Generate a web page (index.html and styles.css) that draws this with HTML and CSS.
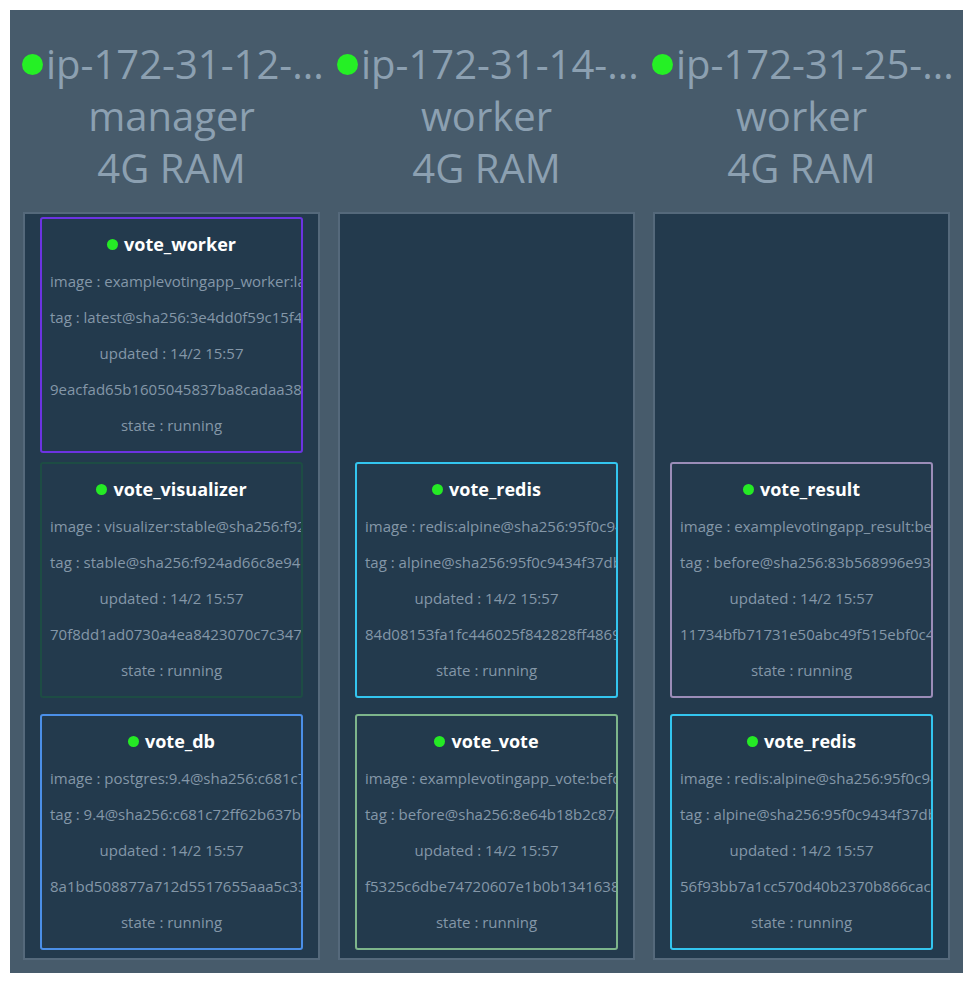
FILE: index.html
```html
<!DOCTYPE html>
<html lang="en">
<head>
<meta charset="utf-8">
<title>Swarm Visualizer</title>
<link rel="stylesheet" href="styles.css">
</head>
<body>
<div class="panel">
  <section class="node">
    <header class="node-head">
      <div class="node-name"><span class="node-dot"></span><span class="node-host">ip-172-31-12-...</span></div>
      <div class="node-line">manager</div>
      <div class="node-line">4G RAM</div>
    </header>
    <div class="stack">
      <div class="card card-purple card-tight">
        <div class="card-title"><span class="dot"></span>vote_worker</div>
        <div class="card-line">image : examplevotingapp_worker:latest@sha256:3e4dd0f59c15f4</div>
        <div class="card-line">tag : latest@sha256:3e4dd0f59c15f4a8b2c1</div>
        <div class="card-line">updated : 14/2 15:57</div>
        <div class="card-line">9eacfad65b1605045837ba8cadaa3840d1a2</div>
        <div class="card-line">state : running</div>
      </div>
      <div class="card card-teal">
        <div class="card-title"><span class="dot"></span>vote_visualizer</div>
        <div class="card-line">image : visualizer:stable@sha256:f924ad66c8e94b</div>
        <div class="card-line">tag : stable@sha256:f924ad66c8e94b1a7c</div>
        <div class="card-line">updated : 14/2 15:57</div>
        <div class="card-line">70f8dd1ad0730a4ea8423070c7c3472b91</div>
        <div class="card-line">state : running</div>
      </div>
      <div class="card card-blue">
        <div class="card-title"><span class="dot"></span>vote_db</div>
        <div class="card-line">image : postgres:9.4@sha256:c681c72ff62b637b</div>
        <div class="card-line">tag : 9.4@sha256:c681c72ff62b637b8a9e</div>
        <div class="card-line">updated : 14/2 15:57</div>
        <div class="card-line">8a1bd508877a712d5517655aaa5c33e1f0</div>
        <div class="card-line">state : running</div>
      </div>
    </div>
  </section>
  <section class="node">
    <header class="node-head">
      <div class="node-name"><span class="node-dot"></span><span class="node-host">ip-172-31-14-...</span></div>
      <div class="node-line">worker</div>
      <div class="node-line">4G RAM</div>
    </header>
    <div class="stack">
      <div class="card card-cyan">
        <div class="card-title"><span class="dot"></span>vote_redis</div>
        <div class="card-line">image : redis:alpine@sha256:95f0c9434f37db</div>
        <div class="card-line">tag : alpine@sha256:95f0c9434f37db0a1e</div>
        <div class="card-line">updated : 14/2 15:57</div>
        <div class="card-line">84d08153fa1fc446025f842828ff48691c</div>
        <div class="card-line">state : running</div>
      </div>
      <div class="card card-green">
        <div class="card-title"><span class="dot"></span>vote_vote</div>
        <div class="card-line">image : examplevotingapp_vote:before@sha256</div>
        <div class="card-line">tag : before@sha256:8e64b18b2c87a3f1d</div>
        <div class="card-line">updated : 14/2 15:57</div>
        <div class="card-line">f5325c6dbe74720607e1b0b13416389a2d</div>
        <div class="card-line">state : running</div>
      </div>
    </div>
  </section>
  <section class="node">
    <header class="node-head">
      <div class="node-name"><span class="node-dot"></span><span class="node-host">ip-172-31-25-...</span></div>
      <div class="node-line">worker</div>
      <div class="node-line">4G RAM</div>
    </header>
    <div class="stack">
      <div class="card card-lavender">
        <div class="card-title"><span class="dot"></span>vote_result</div>
        <div class="card-line">image : examplevotingapp_result:before@sha256</div>
        <div class="card-line">tag : before@sha256:83b568996e93c4a1</div>
        <div class="card-line">updated : 14/2 15:57</div>
        <div class="card-line">11734bfb71731e50abc49f515ebf0c4d82</div>
        <div class="card-line">state : running</div>
      </div>
      <div class="card card-cyan">
        <div class="card-title"><span class="dot"></span>vote_redis</div>
        <div class="card-line">image : redis:alpine@sha256:95f0c9434f37db</div>
        <div class="card-line">tag : alpine@sha256:95f0c9434f37db0a1e</div>
        <div class="card-line">updated : 14/2 15:57</div>
        <div class="card-line">56f93bb7a1cc570d40b2370b866cac7e31</div>
        <div class="card-line">state : running</div>
      </div>
    </div>
  </section>
</div>
</body>
</html>
```

FILE: styles.css
```css
* { box-sizing: border-box; }

html, body {
  margin: 0;
  padding: 0;
  background: #ffffff;
}

body {
  font-family: "Open Sans", "Noto Sans", sans-serif;
}

.panel {
  margin: 10px 0 0 10px;
  width: 953px;
  height: 963px;
  background: #475b6b;
  padding: 28px 13px 13px 13px;
  display: flex;
  gap: 18px;
}

.node {
  width: 297px;
  display: flex;
  flex-direction: column;
}

.node-head {
  height: 156px;
  margin-bottom: 18px;
  color: #8ca0b1;
  font-size: 40px;
  line-height: 52px;
  text-align: center;
}

.node-name {
  display: flex;
  align-items: center;
  white-space: nowrap;
  margin-left: -1px;
}

.node-dot {
  flex: none;
  width: 21px;
  height: 21px;
  border-radius: 50%;
  background: #25f025;
  margin-right: 3px;
}

.node-line {
  white-space: nowrap;
}

.stack {
  flex: 1;
  background: #233a4d;
  border: 2px solid #55697b;
  padding: 3px 0 8px;
  display: flex;
  flex-direction: column;
  justify-content: flex-end;
  align-items: center;
  gap: 16px;
}

.card {
  width: 263px;
  height: 236px;
  flex: none;
  border: 2px solid #6a32e0;
  border-radius: 3px;
  background: #233a4d;
  padding: 10px 8px 8px;
  overflow: hidden;
  text-align: center;
  white-space: nowrap;
}

.card-tight { margin-bottom: -7px; }

.card-purple { border-color: #6c33e2; }
.card-teal { border-color: #1d4c44; }
.card-blue { border-color: #4b8fe8; }
.card-cyan { border-color: #33c5ef; }
.card-green { border-color: #7db58b; }
.card-lavender { border-color: #9b8db8; }

.card-title {
  height: 30px;
  line-height: 30px;
  margin-bottom: 4px;
  color: #ffffff;
  font-weight: 700;
  font-size: 18px;
  display: flex;
  align-items: center;
  justify-content: center;
}

.dot {
  width: 11px;
  height: 11px;
  border-radius: 50%;
  background: #25ea25;
  margin-right: 6px;
  flex: none;
}

.card-line {
  height: 36px;
  line-height: 36px;
  font-size: 15px;
  color: #8497a8;
}
```
